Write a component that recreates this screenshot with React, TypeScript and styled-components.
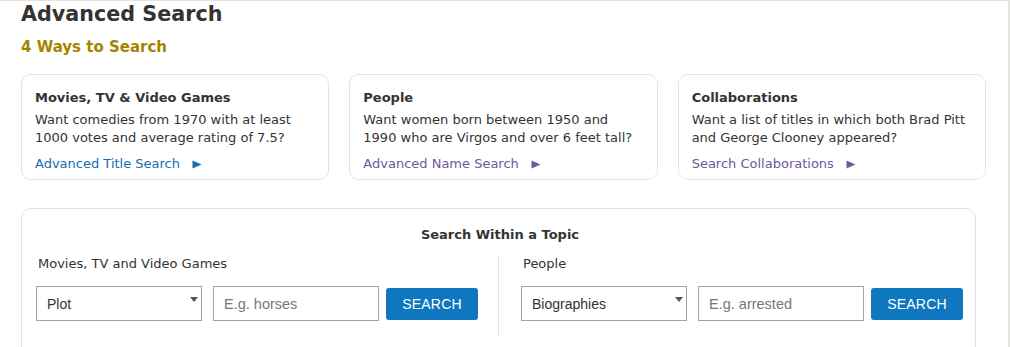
import React from "react";
import styled, { createGlobalStyle } from "styled-components";

const GlobalStyle = createGlobalStyle`
  html, body {
    margin: 0;
    padding: 0;
    background: #e4e4df;
  }
  body {
    font-family: "DejaVu Sans", Verdana, sans-serif;
    color: #333;
  }
  * { box-sizing: border-box; }
`;

const Page = styled.div`
  width: 1008px;
  margin-top: 1px;
  background: #fff;
  padding: 1px 22px 30px 21px;
  min-height: 346px;
`;

const Title = styled.h1`
  margin: 0;
  font-size: 20.7px;
  line-height: 24px;
  font-weight: bold;
  color: #333;
`;

const Subtitle = styled.h2`
  margin: 11px 0 0;
  font-size: 15px;
  line-height: 20px;
  font-weight: bold;
  color: #a58500;
`;

const CardGrid = styled.div`
  margin-top: 17px;
  display: grid;
  grid-template-columns: repeat(3, 1fr);
  column-gap: 20px;
`;

const Card = styled.div`
  border: 1px solid #e3e3e3;
  border-radius: 10px;
  padding: 14px 14px 6px 13px;
`;

const CardTitle = styled.div`
  font-size: 13px;
  line-height: 18px;
  font-weight: bold;
  color: #333;
  margin-bottom: 4px;
`;

const CardText = styled.div`
  font-size: 13px;
  line-height: 18px;
  color: #333;
`;

const CardLink = styled.a<{ $visited?: boolean }>`
  display: flex;
  align-items: center;
  margin-top: 8px;
  font-size: 13px;
  line-height: 18px;
  color: ${(p) => (p.$visited ? "#70579d" : "#136cb2")};
  text-decoration: none;
  cursor: pointer;
`;

const Arrow = styled.svg`
  flex-shrink: 0;
  margin-left: 12px;
  margin-top: 1px;
  width: 10px;
  height: 9px;
  fill: currentColor;
`;

const Panel = styled.section`
  margin-top: 28px;
  width: 955px;
  border: 1px solid #e3e3e3;
  border-radius: 10px;
  padding: 17px 11px 40px 14px;
`;

const PanelTitle = styled.div`
  font-size: 13px;
  line-height: 18px;
  font-weight: bold;
  text-align: center;
  color: #333;
`;

const Columns = styled.div`
  display: flex;
  margin-top: 11px;
`;

const Column = styled.div`
  width: 442px;
  padding-bottom: 16px;
`;

const Divider = styled.div`
  width: 1px;
  background: #e3e3e3;
  margin: 1px 22px 0 20px;
`;

const Label = styled.div`
  padding-left: 2px;
  font-size: 13px;
  line-height: 18px;
  color: #333;
`;

const Row = styled.div`
  display: flex;
  align-items: center;
  margin-top: 13px;
`;

const SelectWrap = styled.div`
  position: relative;
  width: 166px;
  height: 35px;
  &::after {
    content: "";
    position: absolute;
    top: 11px;
    right: 4px;
    width: 0;
    height: 0;
    border-left: 4.5px solid transparent;
    border-right: 4.5px solid transparent;
    border-top: 5px solid #555;
    pointer-events: none;
  }
`;

const Select = styled.select`
  appearance: none;
  -webkit-appearance: none;
  width: 100%;
  height: 100%;
  border: 1px solid #a3a3a3;
  border-radius: 0;
  background: #fff;
  padding: 0 0 0 10px;
  font-family: "Liberation Sans", Arial, sans-serif;
  font-size: 14px;
  color: #333;
  outline: none;
`;

const Input = styled.input`
  width: 166px;
  height: 35px;
  margin-left: 11px;
  border: 1px solid #a3a3a3;
  border-radius: 0;
  padding: 0 0 0 10px;
  font-family: "Liberation Sans", Arial, sans-serif;
  font-size: 14.5px;
  color: #333;
  outline: none;
  &::placeholder {
    color: #777;
  }
`;

const Button = styled.button`
  width: 92px;
  height: 32px;
  margin-left: 7px;
  border: none;
  border-radius: 3px;
  background: #0f77bf;
  color: #fff;
  font-family: "Liberation Sans", Arial, sans-serif;
  font-size: 14px;
  letter-spacing: 0.2px;
  cursor: pointer;
`;

const TriangleIcon = () => (
  <Arrow viewBox="0 0 10 9">
    <path d="M0.5 0.5 L9.5 4.5 L0.5 8.5 Z" />
  </Arrow>
);

const cards = [
  {
    title: "Movies, TV & Video Games",
    text: "Want comedies from 1970 with at least 1000 votes and average rating of 7.5?",
    link: "Advanced Title Search",
    visited: false,
  },
  {
    title: "People",
    text: "Want women born between 1950 and 1990 who are Virgos and over 6 feet tall?",
    link: "Advanced Name Search",
    visited: true,
  },
  {
    title: "Collaborations",
    text: "Want a list of titles in which both Brad Pitt and George Clooney appeared?",
    link: "Search Collaborations",
    visited: true,
  },
];

const topics = [
  { label: "Movies, TV and Video Games", option: "Plot", placeholder: "E.g. horses" },
  { label: "People", option: "Biographies", placeholder: "E.g. arrested" },
];

const TopicColumn = ({ label, option, placeholder }: { label: string; option: string; placeholder: string }) => (
  <Column>
    <Label>{label}</Label>
    <Row>
      <SelectWrap>
        <Select defaultValue={option}>
          <option>{option}</option>
        </Select>
      </SelectWrap>
      <Input placeholder={placeholder} />
      <Button>SEARCH</Button>
    </Row>
  </Column>
);

export default function App() {
  return (
    <>
      <GlobalStyle />
      <Page>
        <Title>Advanced Search</Title>
        <Subtitle>4 Ways to Search</Subtitle>
        <CardGrid>
          {cards.map((c) => (
            <Card key={c.title}>
              <CardTitle>{c.title}</CardTitle>
              <CardText>{c.text}</CardText>
              <CardLink $visited={c.visited}>
                {c.link}
                <TriangleIcon />
              </CardLink>
            </Card>
          ))}
        </CardGrid>
        <Panel>
          <PanelTitle>Search Within a Topic</PanelTitle>
          <Columns>
            <TopicColumn {...topics[0]} />
            <Divider />
            <TopicColumn {...topics[1]} />
          </Columns>
        </Panel>
      </Page>
    </>
  );
}
